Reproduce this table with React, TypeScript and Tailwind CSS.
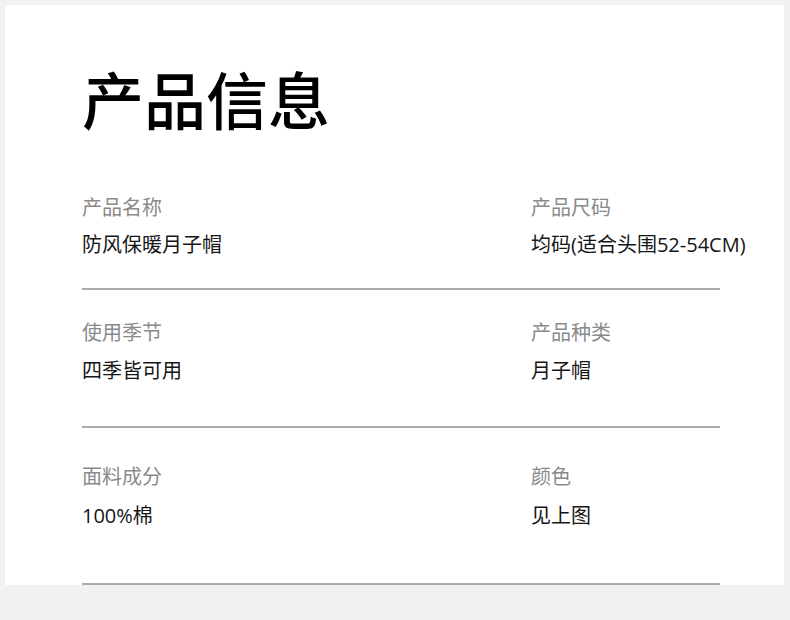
const font = { fontFamily: '"Noto Sans CJK SC", "Noto Sans", sans-serif' };
const valueFont = { fontFamily: '"Open Sans", "Noto Sans CJK SC", sans-serif' };

type Item = { label: string; value: string };

const rows: { items: [Item, Item]; top: string; mid: string; bottom: string }[] = [
  {
    items: [
      { label: "产品名称", value: "防风保暖月子帽" },
      { label: "产品尺码", value: "均码(适合头围52-54CM)" },
    ],
    top: "pt-[67px]",
    mid: "mt-[14px]",
    bottom: "pb-[31px]",
  },
  {
    items: [
      { label: "使用季节", value: "四季皆可用" },
      { label: "产品种类", value: "月子帽" },
    ],
    top: "pt-[30px]",
    mid: "mt-[15px]",
    bottom: "pb-[43px]",
  },
  {
    items: [
      { label: "面料成分", value: "100%棉" },
      { label: "颜色", value: "见上图" },
    ],
    top: "pt-[36px]",
    mid: "mt-[16px]",
    bottom: "pb-[55px]",
  },
];

export default function App() {
  return (
    <div className="h-[620px] w-[790px] bg-[#f1f1f1] pl-[5px] pt-[5px]" style={font}>
      <div className="h-[580px] w-[779px] bg-white pl-[77px] pt-[63px]">
        <h1 className="text-[62px] font-medium leading-[60px] text-black">产品信息</h1>

        {rows.map((row, i) => (
          <div key={i} className="w-[638px]">
            <div className={`grid grid-cols-[449px_1fr] ${row.top} ${row.bottom}`}>
              {row.items.map((it) => (
                <div key={it.label}>
                  <div className="text-[20px] leading-[24px] text-[#8a8a8a]">{it.label}</div>
                  <div
                    className={`${row.mid} whitespace-nowrap text-[20px] leading-[24px] text-[#151515]`}
                    style={valueFont}
                  >
                    {it.value}
                  </div>
                </div>
              ))}
            </div>
            <div className="h-[2px] bg-[#ababab]" />
          </div>
        ))}
      </div>
    </div>
  );
}
